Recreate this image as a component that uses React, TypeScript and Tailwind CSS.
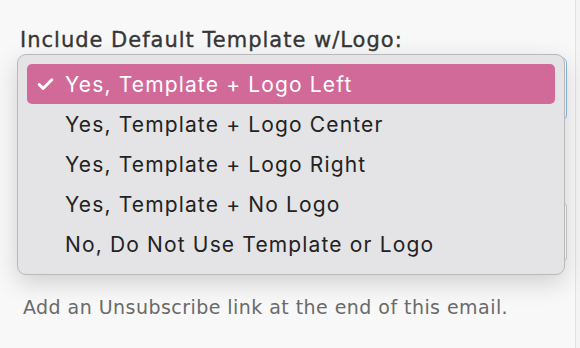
import { Check } from 'lucide-react';

/**************************************************
    DATA
***************************************************/
const options = [
    'Yes, Template + Logo Left',
    'Yes, Template + Logo Center',
    'Yes, Template + Logo Right',
    'Yes, Template + No Logo',
    'No, Do Not Use Template or Logo',
];

/**************************************************
    RENDER COMPONENT
***************************************************/
export default function App() {
    return (
        <div className="w-[580px] h-[348px] flex bg-[#f4f4f4] overflow-hidden">
            <div className="w-[576px] h-full bg-[#f8f8f8] border-r border-[#e2e2e2] font-['DejaVu_Sans',sans-serif]">
                {/* **************************************************    LABEL    ************************************************** */}
                <p className="pl-5 pt-[27px] text-[21px] leading-[26px] text-[#363636] tracking-[1px] [-webkit-text-stroke:0.35px_#363636]">
                    Include Default Template w/Logo:
                </p>

                {/* **************************************************    SELECT + OPEN MENU    ************************************************** */}
                <div className="relative h-[224px]">
                    <div className="ml-5 mr-[8px] mt-[4px] h-[64px] rounded-md border border-[#8fb9e6] bg-white" />
                    <div className="ml-5 mr-[8px] mt-[80px] h-[62px] rounded-md border border-[#cfcfcf] bg-white" />

                    <div className="absolute left-[17px] top-[-3px] w-[548px] rounded-[9px] border border-[#b9b9bb] bg-[#e4e4e6] p-[9px] pb-[10px] shadow-[0_8px_24px_rgba(0,0,0,0.16)] font-['Inter',sans-serif]">
                        {options.map((opt, i) => (
                            <div
                                key={opt}
                                className={
                                    i === 0
                                        ? 'h-[40px] flex items-center rounded-[5px] bg-[#d16a98] text-white'
                                        : 'h-[40px] flex items-center text-[#222222]'
                                }
                            >
                                <span className="w-[38px] pl-[9px] flex items-center">
                                    {i === 0 && <Check size={19} strokeWidth={3.8} />}
                                </span>
                                <span className="text-[21px] leading-none tracking-[1.15px]">{opt}</span>
                            </div>
                        ))}
                    </div>
                </div>

                {/* **************************************************    HELP TEXT    ************************************************** */}
                <p className="pl-[23px] mt-[14px] text-[19px] leading-6 text-[#6a6a6a] tracking-[0.45px]">
                    Add an Unsubscribe link at the end of this email.
                </p>
            </div>
        </div>
    );
}
